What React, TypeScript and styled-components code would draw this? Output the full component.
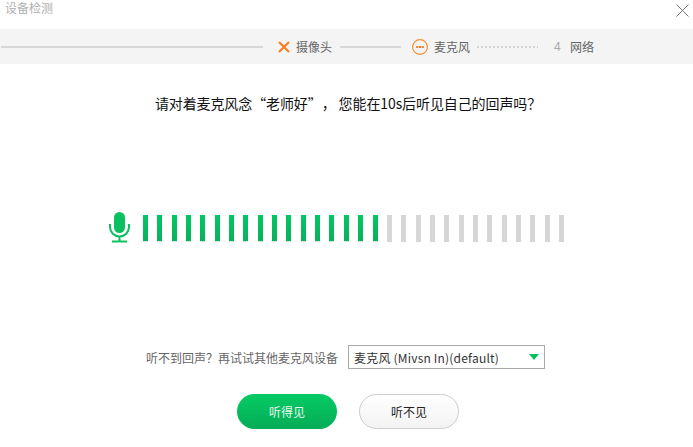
import React from "react";
import styled, { createGlobalStyle } from "styled-components";

const Global = createGlobalStyle`
  html, body { margin: 0; padding: 0; background: #fff; }
  body { font-family: "Noto Sans CJK SC", "Liberation Sans", sans-serif; }
`;
const Page = styled.div`
  width: 693px; height: 447px; overflow: hidden; display: flex; flex-direction: column; background: #fff;
`;
const Header = styled.header`
  height: 29px; display: flex; justify-content: space-between; align-items: flex-start; padding: 0 4px 0 5px; box-sizing: border-box;
`;
const Title = styled.h1`
  margin: 0; font-size: 12px; line-height: 16px; font-weight: 400; color: #b0b0b0;
`;
const Close = styled.button`
  border: 0; background: none; padding: 0; width: 13px; height: 13px; margin: 4px 0 0; display: block;
  svg { display: block; }
`;
const Steps = styled.nav`
  height: 35px; background: #f4f4f4; display: flex; align-items: center; padding-left: 1px;
`;
const Line = styled.span<{ $w: number; $ml: number; $dotted?: boolean }>`
  width: ${p => p.$w}px; margin-left: ${p => p.$ml}px; height: 2px; flex: none; margin-top: 1px;
  background: ${p => p.$dotted ? "repeating-linear-gradient(90deg,#d4d4d4 0 2px,transparent 2px 4px)" : "#d8d8d8"};
`;
const StepIcon = styled.svg<{ $ml: number }>` margin-left: ${p => p.$ml}px; flex: none; display: block; `;
const StepLabel = styled.span<{ $ml: number }>`
  margin-left: ${p => p.$ml}px; font-size: 12px; line-height: 16px; color: #666; flex: none; white-space: nowrap;
`;
const StepNum = styled.span`
  margin-left: 16px; font-family: "Liberation Sans", sans-serif; font-size: 12px; color: #aaa; flex: none; width: 7px;
`;
const Main = styled.main`
  flex: 1; display: flex; flex-direction: column; align-items: center;
`;
const Question = styled.p`
  margin: 29px 0 0 3px; font-size: 14px; line-height: 20px; color: #111; white-space: nowrap; height: 20px;
  text-spacing-trim: space-all; letter-spacing: -0.1px;
`;
const Meter = styled.div`
  margin-top: 98px; height: 34px; display: flex; align-items: flex-start; gap: 12px; align-self: flex-start; margin-left: 108px;
`;
const Bars = styled.div`
  display: grid; grid-template-columns: repeat(30, 5px); column-gap: 9.345px; height: 27px; margin-top: 4px;
`;
const Bar = styled.span<{ $on: boolean }>`
  background: ${p => p.$on ? "linear-gradient(180deg,#00c863,#0bb05c)" : "#d6d6d6"};
  border-bottom: ${p => p.$on ? "1px solid #d6e4dc" : "0"};
`;
const DeviceRow = styled.div`
  margin-top: 100px; display: flex; align-items: center; align-self: flex-start; margin-left: 146px;
`;
const DeviceLabel = styled.label`
  font-size: 12px; color: #666; white-space: nowrap; width: 202px;
`;
const Select = styled.div`
  width: 197px; height: 24px; box-sizing: border-box; border: 1px solid #aaa; display: flex; align-items: center; justify-content: space-between;
  padding: 0 5px; font-size: 12px; color: #333;
`;
const SelectText = styled.span` letter-spacing: 0.2px; white-space: nowrap; `;
const Caret = styled.span`
  width: 0; height: 0; border-left: 5px solid transparent; border-right: 5px solid transparent; border-top: 6px solid #07c160;
`;
const Actions = styled.div`
  margin-top: 25px; display: flex; gap: 22px; align-self: flex-start; margin-left: 237px;
`;
const Btn = styled.button<{ $primary?: boolean }>`
  width: 100px; height: 35px; border-radius: 18px; font-family: inherit; font-size: 12px; padding: 0;
  ${p => p.$primary
    ? "background: linear-gradient(180deg,#05cb64,#07ac57); color: #e8f8ef; border: 0;"
    : "background: linear-gradient(180deg,#fff,#f3f3f3); color: #222; border: 1px solid #ccc;"}
`;

const Mic = () => (
  <svg width="23" height="32" viewBox="0 0 23 32" fill="none">
    <rect x="6" y="1" width="11" height="21" rx="5.5" fill="#0cc062" />
    <path d="M2 13v3a9.5 9.5 0 0 0 19 0v-3" stroke="#0cc062" strokeWidth="2" />
    <path d="M11.5 25.5V30" stroke="#0cc062" strokeWidth="2" />
    <path d="M4 30.5h15" stroke="#0cc062" strokeWidth="2" />
  </svg>
);

export default function App() {
  return (
    <Page>
      <Global />
      <Header>
        <Title>设备检测</Title>
        <Close aria-label="关闭">
          <svg width="13" height="13" viewBox="0 0 13 13"><path d="M.5.5l12 12M12.5.5l-12 12" stroke="#777" strokeWidth="1" fill="none" /></svg>
        </Close>
      </Header>
      <Steps>
        <Line $w={262} $ml={0} />
        <StepIcon $ml={15} width="12" height="12" viewBox="0 0 12 12"><path d="M1 1l10 10M11 1L1 11" stroke="#ff7a1a" strokeWidth="2" fill="none" /></StepIcon>
        <StepLabel $ml={6}>摄像头</StepLabel>
        <Line $w={61} $ml={8} />
        <StepIcon $ml={11} width="16" height="16" viewBox="0 0 16 16">
          <circle cx="8" cy="8" r="7.4" fill="none" stroke="#f98a2c" strokeWidth="1.1" />
          <path d="M4.2 7h2v2h-2zM7 7h2v2H7zM9.8 7h2v2h-2z" fill="#f5781a" />
        </StepIcon>
        <StepLabel $ml={6}>麦克风</StepLabel>
        <Line $w={61} $ml={7} $dotted />
        <StepNum>4</StepNum>
        <StepLabel $ml={9}>网络</StepLabel>
      </Steps>
      <Main>
        <Question>请对着麦克风念“老师好”， 您能在10s后听见自己的回声吗？</Question>
        <Meter>
          <Mic />
          <Bars>
            {Array.from({ length: 30 }, (_, i) => <Bar key={i} $on={i < 17} />)}
          </Bars>
        </Meter>
        <DeviceRow>
          <DeviceLabel>听不到回声？再试试其他麦克风设备</DeviceLabel>
          <Select><SelectText>麦克风 (Mivsn In)(default)</SelectText><Caret /></Select>
        </DeviceRow>
        <Actions>
          <Btn $primary>听得见</Btn>
          <Btn>听不见</Btn>
        </Actions>
      </Main>
    </Page>
  );
}
